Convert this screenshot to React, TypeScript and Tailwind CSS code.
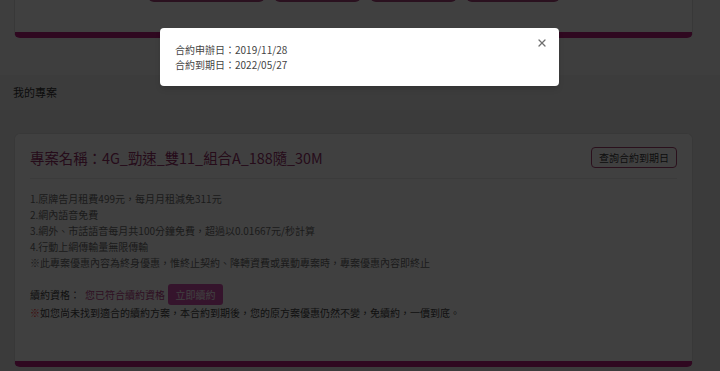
import { X } from "lucide-react";

// Contract info page — dimmed behind a small date modal

const font = { fontFamily: '"Noto Sans CJK TC", "Noto Sans", sans-serif' };

const TopTabs = () => (
  <div className="ml-[14px] w-[679px] h-[38px] bg-white border-x border-[#e0e0e0] border-b-[6px] border-b-[#bc2380] rounded-b-md flex">
    <div className="ml-[133px] flex gap-[9px] -mt-[28px]">
      <div className="w-[117px] h-[30px] rounded-md bg-[#a8437c]" />
      <div className="w-[87px] h-[30px] rounded-md bg-[#a8437c]" />
      <div className="w-[87px] h-[30px] rounded-md bg-[#a8437c]" />
      <div className="w-[94px] h-[30px] rounded-md bg-[#a8437c]" />
    </div>
  </div>
);

const PlanCard = () => (
  <div className="ml-[14px] w-[679px] h-[234px] bg-white border border-[#e0e0e0] border-b-[6px] border-b-[#bc2380] rounded-md px-[15px] pt-[13px]">
    <div className="flex items-center justify-between h-[21px]">
      <div className="text-[14.4px] leading-[21px] text-[#96306a]">專案名稱：4G_勁速_雙11_組合A_188隨_30M</div>
      <button className="h-[21px] px-[7px] rounded-[4px] border border-[#a8406f] text-[10px] leading-[19px] text-[#3a3a3a] bg-white">
        查詢合約到期日
      </button>
    </div>
    <div className="mt-[10px] border-t border-[#ececec]" />
    <div className="pt-[12px] text-[10px] leading-[16px] text-[#6e6e6e]">
      <div>1.原牌告月租費499元，每月月租減免311元</div>
      <div>2.網內語音免費</div>
      <div>3.網外、市話語音每月共100分鐘免費，超過以0.01667元/秒計算</div>
      <div>4.行動上網傳輸量無限傳輸</div>
      <div>※此專案優惠內容為終身優惠，惟終止契約、降轉資費或異動專案時，專案優惠內容即終止</div>
    </div>
    <div className="mt-[13px] flex items-center h-[21px] text-[10px] text-[#444]">
      <span>續約資格：</span>
      <span className="ml-[5px] text-[#b8408a]">您已符合續約資格</span>
      <button className="ml-[3px] h-[21px] w-[55px] rounded-[3px] bg-[#d452ae] text-white text-[10px]">立即續約</button>
    </div>
    <div className="text-[10px] leading-[16px] text-[#444]">
      <span className="text-[#ff2a2a]">※</span>如您尚未找到適合的續約方案，本合約到期後，您的原方案優惠仍然不變，免續約，一價到底。
    </div>
  </div>
);

export default function App() {
  return (
    <div className="relative w-[720px] h-[371px] overflow-hidden bg-[#ececec]" style={font}>
      <div className="h-[75px] bg-[#f5f5f5]">
        <TopTabs />
      </div>
      <div className="h-[35px] bg-[#f0f0f0] flex items-center px-[13px] text-[11px] text-[#333]">我的專案</div>
      <div className="pt-[23px]">
        <PlanCard />
      </div>

      {/* backdrop */}
      <div className="absolute inset-0 bg-black/75" />

      {/* modal */}
      <div className="absolute left-[160px] top-[28px] w-[399px] h-[58px] bg-white rounded-[4px] shadow-md px-[15px] pt-[14px] text-[10px] leading-[15px] text-[#444]">
        <div>合約申辦日：2019/11/28</div>
        <div>合約到期日：2022/05/27</div>
        <button className="absolute right-[11px] top-[9px] text-[#707070]">
          <X size={12} strokeWidth={2.6} />
        </button>
      </div>
    </div>
  );
}
